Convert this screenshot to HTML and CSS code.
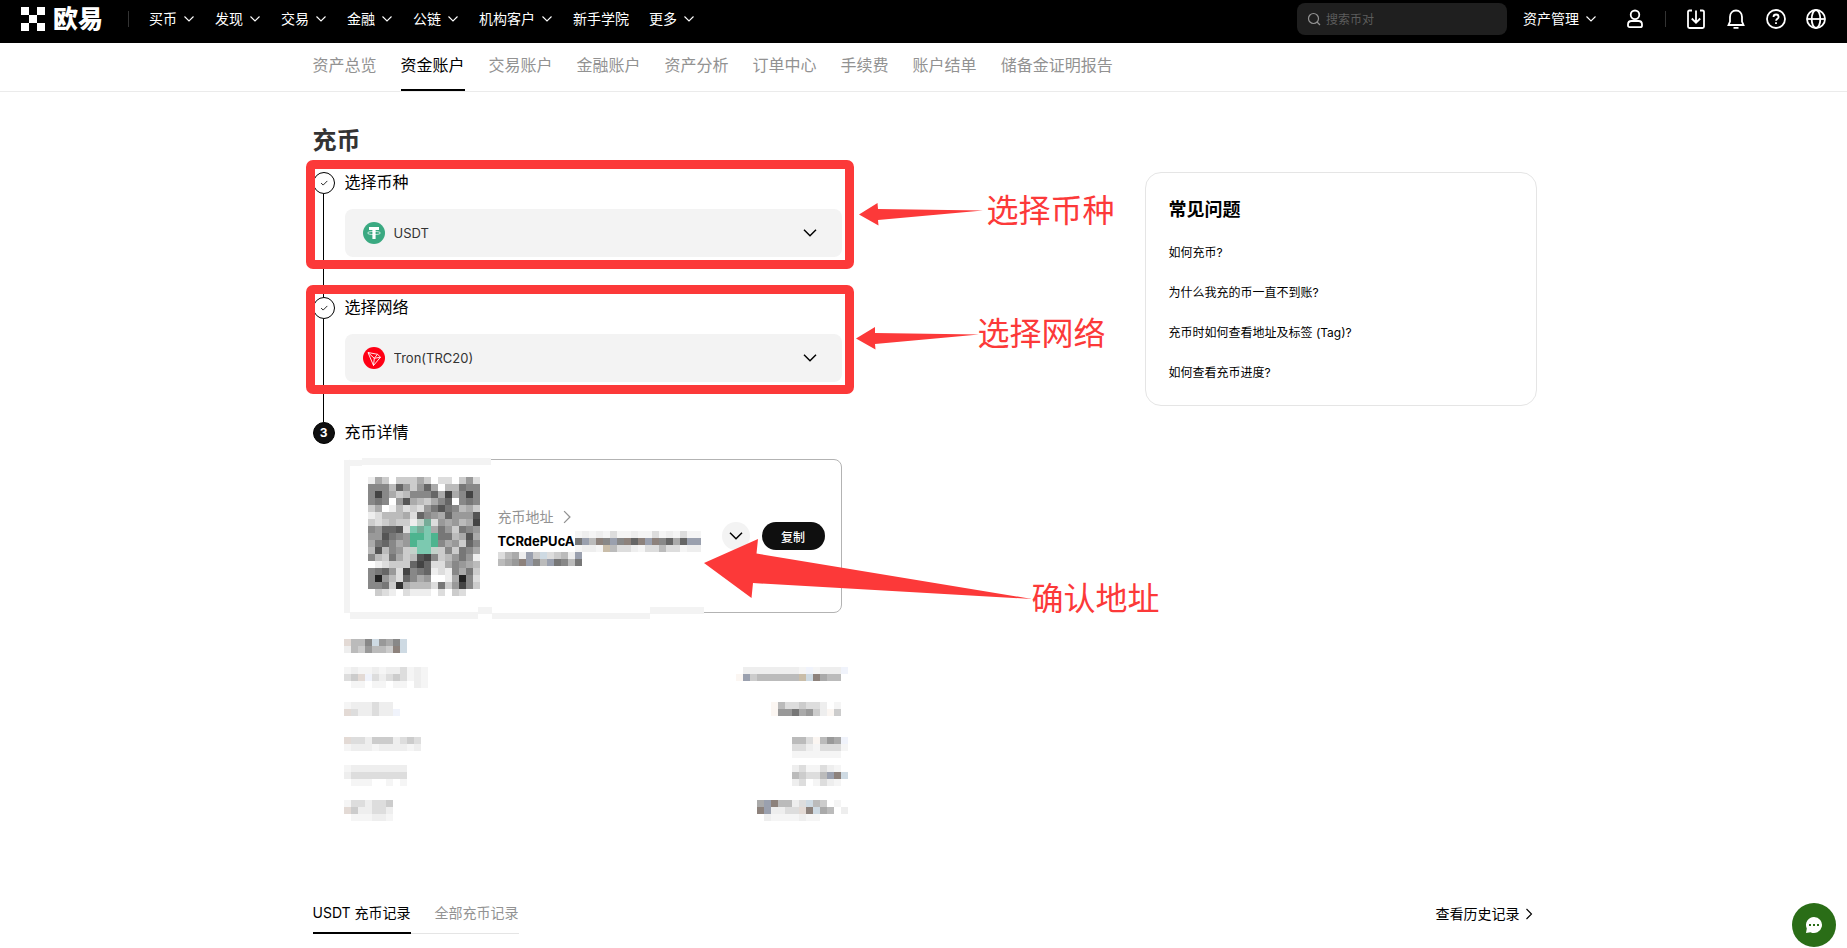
FILE: index.html
```html
<!DOCTYPE html>
<html lang="zh-CN">
<head>
    <meta charset="UTF-8">
    <meta name="viewport" content="width=device-width, initial-scale=1.0">
    <title>充币</title>
    <link rel="stylesheet" href="styles.css">
</head>
<body>
    <svg class="sprite" aria-hidden="true">
        <symbol id="down" viewBox="0 0 12 12"><path d="M1.5 3.5 6 8l4.500-4.500" fill="none" stroke="currentColor" stroke-width="1.100"/></symbol>
        <symbol id="right" viewBox="0 0 12 12"><path d="M3.500 1 8.500 6l-5 5" fill="none" stroke="currentColor" stroke-width="1.100"/></symbol>
        <symbol id="check" viewBox="0 0 12 12"><path d="M2.500 6 5 8.500l5-5" fill="none" stroke="currentColor"/></symbol>
    </svg>

    <header class="topbar">
        <a href="#" class="logo">
            <svg width="24" height="24" viewBox="0 0 24 24" fill="#fff"><path d="M0 0h8v8H0zM16 0h8v8h-8zM8 8h8v8H8zM0 16h8v8H0zM16 16h8v8h-8z"/></svg>
            <span>欧易</span>
        </a>
        <nav class="menu">
            <a href="#">买币 <svg><use href="#down"/></svg></a>
            <a href="#">发现 <svg><use href="#down"/></svg></a>
            <a href="#">交易 <svg><use href="#down"/></svg></a>
            <a href="#">金融 <svg><use href="#down"/></svg></a>
            <a href="#">公链 <svg><use href="#down"/></svg></a>
            <a href="#">机构客户 <svg><use href="#down"/></svg></a>
            <a href="#">新手学院</a>
            <a href="#">更多 <svg><use href="#down"/></svg></a>
        </nav>
        <label class="search">
            <svg width="14" height="14" viewBox="0 0 14 14" fill="none" stroke="#929292" stroke-width="1.200"><circle cx="6.500" cy="6.500" r="5"/><path d="m10 10 3 3"/></svg>
            <input type="text" placeholder="搜索币对" aria-label="搜索币对">
        </label>
        <div class="assets"><a href="#">资产管理 <svg><use href="#down"/></svg></a></div>
        <div class="tools">
            <button type="button" aria-label="用户">
                <svg viewBox="0 0 20 20"><circle cx="10" cy="5.800" r="4.300"/><path d="M6.500 12h7c2 0 3.500 1.500 3.500 3.500v1c0 1-.6 1.700-1.700 1.700H4.700c-1.100 0-1.700-.7-1.700-1.700v-1C3 13.500 4.500 12 6.500 12z"/></svg>
            </button>
            <span class="divider"></span>
            <button type="button" aria-label="下载">
                <svg viewBox="0 0 20 20"><path d="M6 1.500H3.500c-1 0-1.500.6-1.500 1.500v14.500c0 1 .5 1.500 1.500 1.500h13c1 0 1.500-.5 1.500-1.500V3c0-.9-.5-1.500-1.500-1.500H14M10 1.500v12M5.800 9.500l4.200 4.200 4.200-4.200"/></svg>
            </button>
            <button type="button" aria-label="通知">
                <svg viewBox="0 0 20 20"><path d="M4 8c0-4 2.500-6.500 6-6.500S16 4 16 8v4.500l1.500 3.500h-15L4 12.500zM7.500 18.800h5"/></svg>
            </button>
            <button type="button" aria-label="帮助">
                <svg viewBox="0 0 20 20"><circle cx="10" cy="10" r="9"/><path d="M7.500 8c0-1.500 1-2.500 2.600-2.500S12.600 6.500 12.600 8c0 1.700-2.500 1.900-2.500 3.800M10 13.200v1.800"/></svg>
            </button>
            <button type="button" aria-label="语言">
                <svg viewBox="0 0 20 20"><circle cx="10" cy="10" r="9"/><ellipse cx="10" cy="10" rx="4.300" ry="9"/><path d="M1 10h18"/></svg>
            </button>
        </div>
    </header>

    <div class="subnav">
        <nav class="wrap">
            <a href="#">资产总览</a>
            <a href="#" class="active">资金账户</a>
            <a href="#">交易账户</a>
            <a href="#">金融账户</a>
            <a href="#">资产分析</a>
            <a href="#">订单中心</a>
            <a href="#">手续费</a>
            <a href="#">账户结单</a>
            <a href="#">储备金证明报告</a>
        </nav>
    </div>

    <main class="wrap">
        <h1>充币</h1>
        <div class="content">
            <div class="steps">
                <section class="step framed">
                    <div class="rail"><span class="dot"><svg><use href="#check"/></svg></span></div>
                    <div class="step-body">
                        <label class="step-title" for="coin">选择币种</label>
                        <div class="picker">
                            <svg class="coin" viewBox="0 0 22 22"><circle cx="11" cy="11" r="11" fill="#3aa981"/><path d="M6 5h10v3h-3.400v9H9.400V8H6z" fill="#fff"/><ellipse cx="11" cy="11" rx="6.500" ry="1.600" fill="none" stroke="#fff" stroke-width=".7"/></svg>
                            <select id="coin"><option>USDT</option></select>
                            <svg class="arrow"><use href="#down"/></svg>
                        </div>
                    </div>
                </section>
                <section class="step framed">
                    <div class="rail"><span class="dot"><svg><use href="#check"/></svg></span></div>
                    <div class="step-body">
                        <label class="step-title" for="network">选择网络</label>
                        <div class="picker">
                            <svg class="coin" viewBox="0 0 22 22"><circle cx="11" cy="11" r="11" fill="#ff0015"/><path d="m5 5.500 9.500 1.800 3 2.900-7 8.300zM5 5.500l6.300 5.800 3.200-4M11.300 11.300l6.200-1.100M11.300 11.300l-.8 7.200" fill="none" stroke="#fff" stroke-width=".9"/></svg>
                            <select id="network"><option>Tron(TRC20)</option></select>
                            <svg class="arrow"><use href="#down"/></svg>
                        </div>
                    </div>
                </section>
                <section class="step last">
                    <div class="rail"><span class="dot current">3</span></div>
                    <div class="step-body">
                        <h2 class="step-title">充币详情</h2>
                        <div class="address">
                            <svg class="smudge" viewBox="0 0 362 162" aria-hidden="true">
                                <path d="M0 2h6v153H0z" fill="#f3f3f3"/>
                                <path d="M6 1h141v8H6zM6 153h300v5H6z" fill="#fff"/>
                                <path d="M0 2h18v6H0zM18 0h129v7H18zM6 154h128v7H6zM134 149h14v7h-14zM148 155h158v6H148zM306 149h54v7h-54z" fill="#f3f3f3"/>
                            </svg>
                            <svg class="mosaic qr" data-mosaic="qr"></svg>
                            <div class="address-info">
                                <a href="#">充币地址 <svg><use href="#right"/></svg></a>
                                <div class="address-line"><b>TCRdePUcA</b><svg class="mosaic" data-mosaic="hash"></svg></div>
                                <svg class="mosaic" data-mosaic="hashEnd"></svg>
                            </div>
                            <button type="button" class="more" aria-label="展开"><svg><use href="#down"/></svg></button>
                            <button type="button" class="copy">复制</button>
                        </div>
                        <div class="details">
                            <svg class="mosaic" data-mosaic="names"></svg>
                            <svg class="mosaic" data-mosaic="values"></svg>
                        </div>
                    </div>
                </section>
            </div>

            <aside class="faq">
                <h2>常见问题</h2>
                <a href="#">如何充币?</a>
                <a href="#">为什么我充的币一直不到账?</a>
                <a href="#">充币时如何查看地址及标签 (Tag)?</a>
                <a href="#">如何查看充币进度?</a>
            </aside>

            <!-- red notes over the form -->
            <div class="note note-coin">
                <svg width="128" height="32"><path d="M0 19.500 18.500 8l.5 6 105 1.500L19 25l.5 5.500z"/></svg>
                <span>选择币种</span>
            </div>
            <div class="note note-network">
                <svg width="122" height="32"><path d="M0 20.500 19 9v6l104 1.500L19 26l.5 5.500z"/></svg>
                <span>选择网络</span>
            </div>
            <div class="note note-address">
                <svg width="328" height="76"><path d="M0 24 54 0l-1.500 14.500L328 60 49 44l-1.500 15z"/></svg>
                <span>确认地址</span>
            </div>
        </div>

        <div class="records">
            <nav class="tabs">
                <a href="#" class="active">USDT 充币记录</a>
                <a href="#">全部充币记录</a>
            </nav>
            <a href="#" class="history">查看历史记录 <svg><use href="#right"/></svg></a>
        </div>
    </main>

    <button type="button" class="chat" aria-label="在线客服">
        <svg width="18" height="18" viewBox="0 0 18 18"><path d="M9 1a8 8 0 1 1-3.500 15.200L1 17l.8-4.500A8 8 0 0 1 9 1z" fill="#fff"/><path d="M4 8h2v2H4zM8 8h2v2H8zM12 8h2v2h-2z" fill="#2a6d17"/></svg>
    </button>

    <script src="script.js"></script>
</body>
</html>
```
FILE: styles.css
```css
* {
    box-sizing: border-box;
}

body {
    margin: 0;
    background: #fff;
    color: #000;
    font-family: Inter, "Noto Sans CJK SC", sans-serif;
    font-size: 14px;
    line-height: 22px;
}

a {
    color: inherit;
    text-decoration: none;
}

button {
    border: 0;
    padding: 0;
    font-family: inherit;
    cursor: pointer;
}

h1, h2 {
    margin: 0;
}

svg {
    flex: none;
    display: block;
}

.sprite {
    position: absolute;
    width: 0;
    height: 0;
}

.wrap {
    width: 100%;
    max-width: 1226px;
    margin: 0 auto;
    padding-left: 2px;
}

/* top bar */
.topbar {
    display: flex;
    align-items: center;
    height: 43px;
    padding: 0 21px 5px;
    background: #000;
    color: #fff;
}

.logo {
    display: flex;
    align-items: center;
    gap: 8px;
    padding-right: 25px;
    font-size: 25px;
    font-weight: 900;
    line-height: 24px;
}

.menu {
    display: flex;
    gap: 20px;
    padding-left: 20px;
}

.menu::before {
    content: "";
    align-self: center;
    width: 1px;
    height: 16px;
    margin-left: -20px;
    background: #333;
}

.menu a, .assets a {
    display: flex;
    align-items: center;
    gap: 6px;
    white-space: nowrap;
}

.menu svg, .assets svg {
    width: 12px;
    height: 12px;
}

.search {
    display: flex;
    align-items: center;
    gap: 5px;
    width: 210px;
    height: 32px;
    margin-left: auto;
    padding: 0 10px;
    border-radius: 8px;
    background: #1f1f1f;
}

.search input {
    width: 100%;
    border: 0;
    padding: 0;
    background: none;
    color: #fff;
    font-family: inherit;
    font-size: 12px;
    outline: none;
}

.search input::placeholder {
    color: #5c5c5c;
}

.assets {
    padding: 0 28px 0 16px;
}

.tools {
    display: flex;
    align-items: center;
    gap: 20px;
}

.tools button {
    background: none;
}

.tools svg {
    width: 20px;
    height: 20px;
    fill: none;
    stroke: #fff;
    stroke-width: 1.8;
}

.divider {
    width: 1px;
    height: 16px;
    background: #333;
}

/* account tabs */
.subnav {
    border-bottom: 1px solid #ebebeb;
}

.subnav nav {
    display: flex;
    gap: 24px;
    color: #929292;
    font-size: 16px;
    line-height: 24px;
}

.subnav a {
    padding: 10px 0 12px;
    border-bottom: 2px solid transparent;
}

.subnav .active {
    border-color: #000;
    color: #000;
}

/* deposit form */
h1 {
    padding-top: 33px;
    color: #333;
    font-size: 24px;
    line-height: 32px;
}

.content {
    position: relative;
    display: flex;
    align-items: flex-start;
    justify-content: space-between;
    margin-top: 15px;
}

.steps {
    flex: 0 1 529px;
}

.step {
    position: relative;
    display: flex;
    gap: 10px;
}

.framed::after {
    content: "";
    position: absolute;
    inset: -12px -12px 28px -7px;
    border: 9px solid #fc3939;
    border-radius: 7px;
    pointer-events: none;
}

.rail {
    display: flex;
    flex-direction: column;
    align-items: center;
    width: 22px;
}

.rail::after {
    content: "";
    flex: 1;
    width: 1px;
    background: #000;
}

.last .rail::after {
    display: none;
}

.dot {
    display: flex;
    align-items: center;
    justify-content: center;
    width: 22px;
    height: 22px;
    border: 1px solid #000;
    border-radius: 50%;
    font-size: 12px;
    font-weight: 700;
}

.dot svg {
    width: 10px;
    height: 10px;
}

.current {
    background: #0f0f0f;
    color: #fff;
}

.step-body {
    flex: 1;
    padding-bottom: 40px;
}

.last .step-body {
    padding-bottom: 0;
}

.step-title {
    display: block;
    margin-bottom: 17px;
    font-size: 16px;
    font-weight: 400;
    line-height: 20px;
}

.picker {
    display: flex;
    align-items: center;
    gap: 9px;
    height: 48px;
    padding: 0 24px 0 18px;
    border-radius: 8px;
    background: #f3f3f3;
}

.coin {
    width: 22px;
    height: 22px;
}

.picker select {
    flex: 1;
    border: 0;
    padding: 0;
    appearance: none;
    background: none;
    color: #333;
    font-family: inherit;
    font-size: 13px;
}

.arrow {
    width: 16px;
    height: 16px;
}

.address {
    position: relative;
    display: flex;
    align-items: center;
    height: 154px;
    padding: 0 16px 0 22px;
    border: 1px solid #b3b3b3;
    border-radius: 8px;
}

.smudge {
    position: absolute;
    top: -2px;
    left: -2px;
    width: 362px;
    height: 162px;
}

.qr {
    position: relative;
}

.address-info {
    flex: 1;
    margin-left: 18px;
}

.address-info a {
    display: flex;
    align-items: center;
    gap: 6px;
    margin-bottom: 2px;
    color: #929292;
}

.address-info a svg {
    width: 14px;
    height: 14px;
}

.address-line {
    display: flex;
    align-items: center;
    height: 22px;
    font-size: 13px;
}

.more {
    display: flex;
    align-items: center;
    justify-content: center;
    width: 28px;
    height: 28px;
    border-radius: 50%;
    background: #f3f3f3;
    color: #000;
}

.more svg {
    width: 16px;
    height: 16px;
}

.copy {
    width: 63px;
    height: 28px;
    margin-left: 12px;
    border-radius: 14px;
    background: #0f0f0f;
    color: #fff;
    font-size: 12px;
    font-weight: 500;
}

.details {
    display: flex;
    justify-content: space-between;
    margin: 26px -6px 0 -1px;
}

/* faq */
.faq {
    display: flex;
    flex-direction: column;
    gap: 20px;
    width: 392px;
    padding: 24px 23px 22px;
    border: 1px solid #e5e5e5;
    border-radius: 16px;
    font-size: 12px;
    line-height: 20px;
}

.faq h2 {
    font-size: 18px;
    line-height: 26px;
}

/* notes */
.note {
    position: absolute;
    display: flex;
    color: #fc3939;
    font-size: 32px;
    line-height: 32px;
    white-space: nowrap;
    pointer-events: none;
}

.note svg {
    fill: #fc3939;
    overflow: visible;
}

.note-coin {
    top: 23px;
    left: 546px;
}

.note-network {
    top: 146px;
    left: 543px;
}

.note-address {
    top: 367px;
    left: 391px;
    align-items: flex-end;
}

/* records */
.records {
    display: flex;
    justify-content: space-between;
    margin-top: 81px;
}

.tabs {
    display: flex;
    gap: 24px;
    border-bottom: 1px solid #e5e5e5;
    color: #929292;
}

.tabs a {
    padding-bottom: 8px;
}

.tabs .active {
    margin-bottom: -1px;
    border-bottom: 2px solid #000;
    color: #000;
}

.history {
    display: flex;
    align-items: center;
    align-self: flex-start;
    gap: 3px;
    padding-right: 2px;
    line-height: 24px;
}

.history svg {
    width: 12px;
    height: 12px;
}

.chat {
    position: fixed;
    right: 11px;
    bottom: 1px;
    display: flex;
    align-items: center;
    justify-content: center;
    width: 44px;
    height: 44px;
    border-radius: 50%;
    background: #2a6d17;
}
```
FILE: script.js
```javascript
// one character per cell: 0-f are greys, the others are listed here
var tints = {
    g: '#4db48f', h: '#7cc9b0', i: '#76ac98', j: '#c4d2cb',
    p: '#e3dad5', q: '#9aa0ae', r: '#8d827c', s: '#f0f3fb',
    t: '#fbf6f2', u: '#cedae3', v: '#c9bda9', z: '#f5f5f5'
};

var size = 7;

var mosaics = {
    qr: [
        'eacfcccacfddfc9d',
        '888b69c96afbb788',
        '848acb8886a4a848',
        '878f95abca86f878',
        'cafebdcd97578bac',
        'edbbbad689a69995',
        'cdcbccejid9a9ba4',
        '89665dhiha79c789',
        '995789gghg77ba5a',
        'a768a9ghhg8a9c68',
        'b5b89cjhhjc8c78a',
        '8bc7acb548cb979e',
        'fedccc646dda89ab',
        '8769d4876ede8a7c',
        '829bd68a9ffea28d',
        '887c3abbbd7c948c',
        'fcdefdeeefdfcdff'
    ],
    hash: [
        'zezezdzzezzdzezdzz',
        '7qbr8q8r6rqr86a6qq',
        'zeezvbddezddbddzee'
    ],
    hashEnd: [
        'dbaeqcudcbeq',
        'ba9rq8bq78b7'
    ],
    names: [
        'pbb8u9a8u...',
        'ebc9bbcru...',
        '', '',
        'zezzezeedzez',
        'dcpsdedcdzez',
        '.zz.zz.zz.ez',
        '', '',
        'zeeedee.....',
        'pdeedees....',
        '', '', '',
        'pddecccedcd.',
        'zeeezeeeeze.',
        '', '',
        'zeeeeeeee...',
        'edddddddd...',
        '.zzz..z.z...',
        '', '',
        'zddeddc.....',
        'pceedde.....',
        '.zzzeez.....'
    ],
    values: [
        '', '', '', '',
        '.eeeeeeeezszeees',
        'tqcbbbbbbvurabb.',
        '', '', '',
        '.....tbddcdde.z.',
        '.....t997a9cetc.',
        '', '', '',
        '........bbdtb9as',
        '........ddezdddz',
        '........zzzzzzz.',
        '',
        '........edzzdez.',
        '........bcddbqru',
        '........ed.zdez.',
        '', '',
        '...aqrbbedubc.z.',
        '...rqeeddpruab.e',
        '....ezzzzezz....'
    ]
};

document.querySelectorAll('[data-mosaic]').forEach(function(svg) {
    var rows = mosaics[svg.dataset.mosaic];
    var cols = rows[rows.length - 1].length;
    var rects = '';
    rows.forEach(function(row, y) {
        row.split('').forEach(function(cell, x) {
            if (cell === '.') return;
            var fill = tints[cell] || '#' + cell + cell + cell;
            rects += '<rect x="' + x * size + '" y="' + y * size + '" width="' + size + '" height="' + size + '" fill="' + fill + '"/>';
        });
    });
    svg.setAttribute('width', cols * size);
    svg.setAttribute('height', rows.length * size);
    svg.setAttribute('shape-rendering', 'crispEdges');
    svg.innerHTML = rects;
});
```
